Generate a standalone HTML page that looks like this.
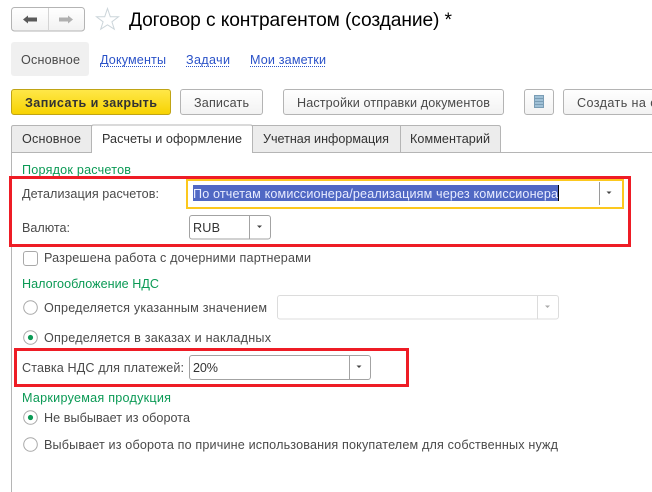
<!DOCTYPE html>
<html><head><meta charset="utf-8">
<style>
html,body{margin:0;padding:0;background:#fff;width:652px;height:492px;overflow:hidden}
svg{display:block}
text{font-family:"Liberation Sans",sans-serif;font-size:12.6px;fill:#4b4b4b}
.t{fill:#4a4a4a}
.g{fill:#0b9a55}
.l{fill:#2a52c8}
.d{fill:#333}
.btn{fill:url(#bg);stroke:#b4b4b4}
</style></head><body>
<svg width="652" height="492" viewBox="0 0 652 492" xmlns="http://www.w3.org/2000/svg">
<defs>
<linearGradient id="bg" x1="0" y1="0" x2="0" y2="1"><stop offset="0" stop-color="#ffffff"/><stop offset="1" stop-color="#f2f2f2"/></linearGradient>
<linearGradient id="yb" x1="0" y1="0" x2="0" y2="1"><stop offset="0" stop-color="#ffe84a"/><stop offset="1" stop-color="#f7d200"/></linearGradient>
</defs>
<!-- nav -->
<rect x="11.5" y="7.5" width="73" height="23.5" rx="3" class="btn"/>
<line x1="48.5" y1="8" x2="48.5" y2="31" stroke="#d4d4d4"/>
<path d="M23 19.5L28 15.5V17.500H37V21.500H28V23.5Z" fill="#5a5a5a"/>
<path d="M73 19.5L68 15.5V17.500H59V21.500H68V23.5Z" fill="#b0b0b0"/>
<!-- star -->
<path d="M107.500 8.500L110.300 16.800H118.500L111.900 21.800L114.300 29.200L107.500 24.800L100.700 29.200L103.100 21.800L96.500 16.800H104.700Z" fill="#fff" stroke="#ccd5da" stroke-width="1"/>
<text x="129" y="26" style="font-size:19.2px;fill:#000" textLength="323">Договор с контрагентом (создание) *</text>
<!-- section nav -->
<rect x="11" y="42" width="78" height="34" rx="3" fill="#f0f0f0"/>
<text x="21" y="64" class="t" textLength="59">Основное</text>
<text x="100" y="64" class="l" textLength="66">Документы</text>
<line x1="100" y1="66.5" x2="166" y2="66.5" stroke="#2a52c8" stroke-dasharray="1 1"/>
<text x="186" y="64" class="l" textLength="44">Задачи</text>
<line x1="186" y1="66.5" x2="230" y2="66.5" stroke="#2a52c8" stroke-dasharray="1 1"/>
<text x="250" y="64" class="l" textLength="76">Мои заметки</text>
<line x1="250" y1="66.5" x2="326" y2="66.5" stroke="#2a52c8" stroke-dasharray="1 1"/>
<!-- buttons -->
<rect x="11.5" y="89.5" width="159" height="25" rx="2.5" fill="url(#yb)" stroke="#c0a415"/>
<text x="25" y="107" class="d" style="font-weight:bold" textLength="132">Записать и закрыть</text>
<rect x="180.5" y="89.5" width="82" height="25" rx="2.5" class="btn"/>
<text x="194" y="107" class="t" textLength="55">Записать</text>
<rect x="283.5" y="89.5" width="220" height="25" rx="2.5" class="btn"/>
<text x="297" y="107" class="t" textLength="193">Настройки отправки документов</text>
<rect x="524.5" y="89.5" width="29" height="25" rx="2.5" class="btn"/>
<g fill="#9fc0d6" stroke="#7a9db5" stroke-width="1">
<rect x="534.5" y="95.5" width="9" height="3"/><rect x="534.5" y="98.5" width="9" height="3"/><rect x="534.5" y="101.5" width="9" height="3"/><rect x="534.5" y="104.5" width="9" height="3"/>
</g>
<rect x="563.5" y="89.5" width="130" height="25" rx="2.5" class="btn"/>
<text x="577" y="107" class="t" letter-spacing="0.4">Создать на основании</text>
<!-- tabs -->
<line x1="11" y1="152.5" x2="652" y2="152.5" stroke="#b5b5b5"/>
<line x1="11.5" y1="153" x2="11.5" y2="492" stroke="#b5b5b5"/>
<path d="M11.5 152.5V127.5Q11.5 125.5 13.5 125.5H91.5V152.5Z" fill="#ececec" stroke="#b5b5b5"/>
<path d="M252.5 152.5V125.5H400.500V152.5Z" fill="#ececec" stroke="#b5b5b5"/>
<path d="M400.500 152.5V125.500H498.500Q500.5 125.500 500.5 127.5V152.5Z" fill="#ececec" stroke="#b5b5b5"/>
<path d="M91.5 153V127Q91.500 125 93.500 125H250.500Q252.500 125 252.500 127V153" fill="#fff" stroke="#b5b5b5"/>
<rect x="92" y="151" width="160" height="3" fill="#fff"/>
<text x="22" y="143" class="d" textLength="59">Основное</text>
<text x="102" y="143" class="d" textLength="140">Расчеты и оформление</text>
<text x="263" y="143" class="d" textLength="126">Учетная информация</text>
<text x="410" y="143" class="d" textLength="80">Комментарий</text>
<!-- group 1 -->
<text x="22" y="174" class="g" textLength="109">Порядок расчетов</text>
<text x="22" y="198" class="t" textLength="137">Детализация расчетов:</text>
<rect x="187" y="180" width="436" height="28" fill="#fff" stroke="#fcc81e" stroke-width="2"/>
<rect x="193" y="185" width="365" height="16" fill="#5068c4"/>
<rect x="558" y="185" width="1" height="16" fill="#000"/>
<text x="193" y="198" style="fill:#e8ecff" textLength="365">По отчетам комиссионера/реализациям через комиссионера</text>
<line x1="599.500" y1="182" x2="599.500" y2="205" stroke="#9a9a9a"/>
<path d="M606.500 191.500H611.500L609 194Z" fill="#444"/>
<text x="22" y="232" class="t" textLength="48">Валюта:</text>
<rect x="189.500" y="215.500" width="81" height="23.500" rx="2.500" fill="#fff" stroke="#a3a3a3"/>
<line x1="249.500" y1="216" x2="249.500" y2="239" stroke="#a3a3a3"/>
<path d="M257 225.500H262L259.500 228Z" fill="#444"/>
<text x="193" y="232" class="d" textLength="27">RUB</text>
<rect x="23.500" y="251.500" width="14" height="14" rx="2.500" fill="#fff" stroke="#a9a9a9"/>
<text x="44" y="262" class="t" textLength="267">Разрешена работа с дочерними партнерами</text>
<!-- group 2 -->
<text x="22" y="288" class="g" textLength="137">Налогообложение НДС</text>
<circle cx="30.500" cy="307.500" r="6.800" fill="#fff" stroke="#a9a9a9"/>
<text x="44" y="312" class="t" textLength="223">Определяется указанным значением</text>
<rect x="277.500" y="295.500" width="281" height="23.500" rx="2.500" fill="#fff" stroke="#dcdcdc"/>
<line x1="537.500" y1="296" x2="537.500" y2="319" stroke="#dcdcdc"/>
<path d="M545 305.500H550L547.500 308Z" fill="#aaa"/>
<circle cx="30.500" cy="337.500" r="6.800" fill="#fff" stroke="#a9a9a9"/>
<circle cx="30.500" cy="337.500" r="2.600" fill="#0b9a55"/>
<text x="44" y="342" class="t" textLength="227">Определяется в заказах и накладных</text>
<text x="22" y="372" class="t" textLength="162">Ставка НДС для платежей:</text>
<rect x="189.500" y="355.500" width="181" height="24" rx="2.500" fill="#fff" stroke="#a3a3a3"/>
<line x1="349.500" y1="356" x2="349.500" y2="380" stroke="#a3a3a3"/>
<path d="M356.500 365.500H361.500L359 368Z" fill="#444"/>
<text x="193" y="372" class="d" textLength="25">20%</text>
<!-- group 3 -->
<text x="22" y="402" class="g" textLength="149">Маркируемая продукция</text>
<circle cx="30.500" cy="417.500" r="6.800" fill="#fff" stroke="#a9a9a9"/>
<circle cx="30.500" cy="417.500" r="2.600" fill="#0b9a55"/>
<text x="44" y="422" class="t" textLength="146">Не выбывает из оборота</text>
<circle cx="30.500" cy="444.500" r="6.800" fill="#fff" stroke="#a9a9a9"/>
<text x="44" y="449" class="t" textLength="514">Выбывает из оборота по причине использования покупателем для собственных нужд</text>
<!-- red annotation boxes -->
<rect x="10.500" y="177.500" width="619" height="68" fill="none" stroke="#ee1c25" stroke-width="3"/>
<rect x="15.500" y="349.500" width="392" height="36" fill="none" stroke="#ee1c25" stroke-width="3"/>
</svg>
</body></html>
